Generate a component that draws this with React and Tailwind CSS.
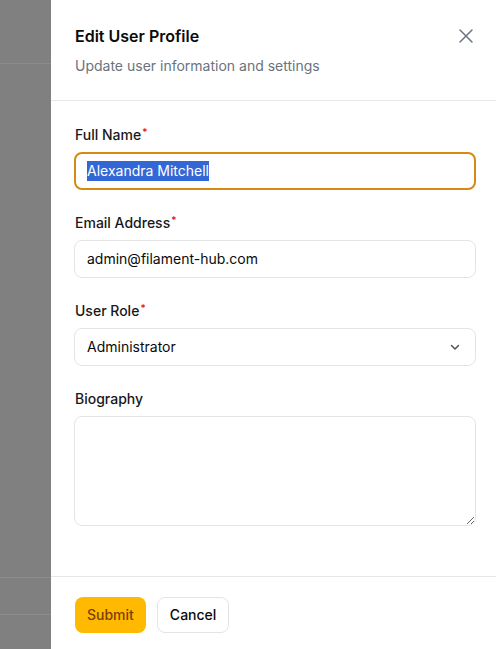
import React from "react";

function Label({ children, required }) {
  return (
    <div className="text-sm leading-5 font-medium text-[#18181b] h-5 pl-px">
      {children}
      {required && <sup className="text-red-600 text-[10px] ml-[1px] top-[-0.45em]">*</sup>}
    </div>
  );
}

export default function App() {
  return (
    <div className="h-[649px] w-[496px] flex overflow-hidden" style={{ fontFamily: "Inter, 'Noto Sans', sans-serif" }}>
      <div className="w-[51px] shrink-0 bg-[#808080] flex flex-col">
        <div className="h-[64px] border-b border-[#8b8b8b]"></div>
        <div className="h-[514px] border-b border-[#8b8b8b]"></div>
        <div className="h-[37px] border-b border-[#8b8b8b]"></div>
      </div>
      <div className="flex-1 bg-white flex flex-col">
        <div className="pl-6 pr-5 pt-6 pb-6 border-b border-[#e5e7eb] flex items-start justify-between">
          <div>
            <div className="text-base leading-6 font-semibold text-[#0a0a0a]">Edit User Profile</div>
            <div className="mt-2 text-sm leading-5 text-[#6b7280]">Update user information and settings</div>
          </div>
          <button className="mt-[3px] mr-[1px] text-[#6b7280]">
            <svg width="18" height="18" viewBox="0 0 18 18" fill="none" stroke="currentColor" strokeWidth="1.5" strokeLinecap="round">
              <path d="M3 3L15 15M15 3L3 15" />
            </svg>
          </button>
        </div>
        <div className="flex-1 pl-[23px] pr-5 pt-6 flex flex-col gap-[23px]">
          <div className="flex flex-col gap-[7px]">
            <Label required>Full Name</Label>
            <div className="h-[38px] rounded-lg border-2 border-[#d58a12] flex items-center px-[11px] text-sm text-[#0a0a0a]">
              <span className="bg-[#3367d6] text-white leading-[20px]">Alexandra Mitchell</span>
            </div>
          </div>
          <div className="flex flex-col gap-[7px]">
            <Label required>Email Address</Label>
            <div className="h-[38px] rounded-lg border border-[#e4e4e7] flex items-center px-3 text-sm text-[#0a0a0a]">
              admin@filament-hub.com
            </div>
          </div>
          <div className="flex flex-col gap-[7px]">
            <Label required>User Role</Label>
            <div className="h-[38px] rounded-lg border border-[#e4e4e7] flex items-center justify-between pl-3 pr-[14px] text-sm text-[#0a0a0a]">
              <span>Administrator</span>
              <svg width="12" height="12" viewBox="0 0 12 12" fill="none" stroke="#52525b" strokeWidth="1.5" strokeLinecap="round" strokeLinejoin="round">
                <path d="M2.5 4.5L6 8L9.5 4.5" />
              </svg>
            </div>
          </div>
          <div className="flex flex-col gap-[7px]">
            <Label>Biography</Label>
            <textarea className="h-[110px] rounded-lg border border-[#e4e4e7] outline-none resize-y px-3 py-2 text-sm"></textarea>
          </div>
        </div>
        <div className="h-[73px] shrink-0 border-t border-[#e5e7eb] pl-6 pt-5 flex items-start gap-[11px]">
          <button className="h-9 px-3 rounded-lg bg-[#ffb900] text-[#7b3f06] text-sm font-medium">Submit</button>
          <button className="h-9 px-3 rounded-lg border border-[#e4e4e7] bg-white text-[#0a0a0a] text-sm font-medium">Cancel</button>
        </div>
      </div>
    </div>
  );
}
